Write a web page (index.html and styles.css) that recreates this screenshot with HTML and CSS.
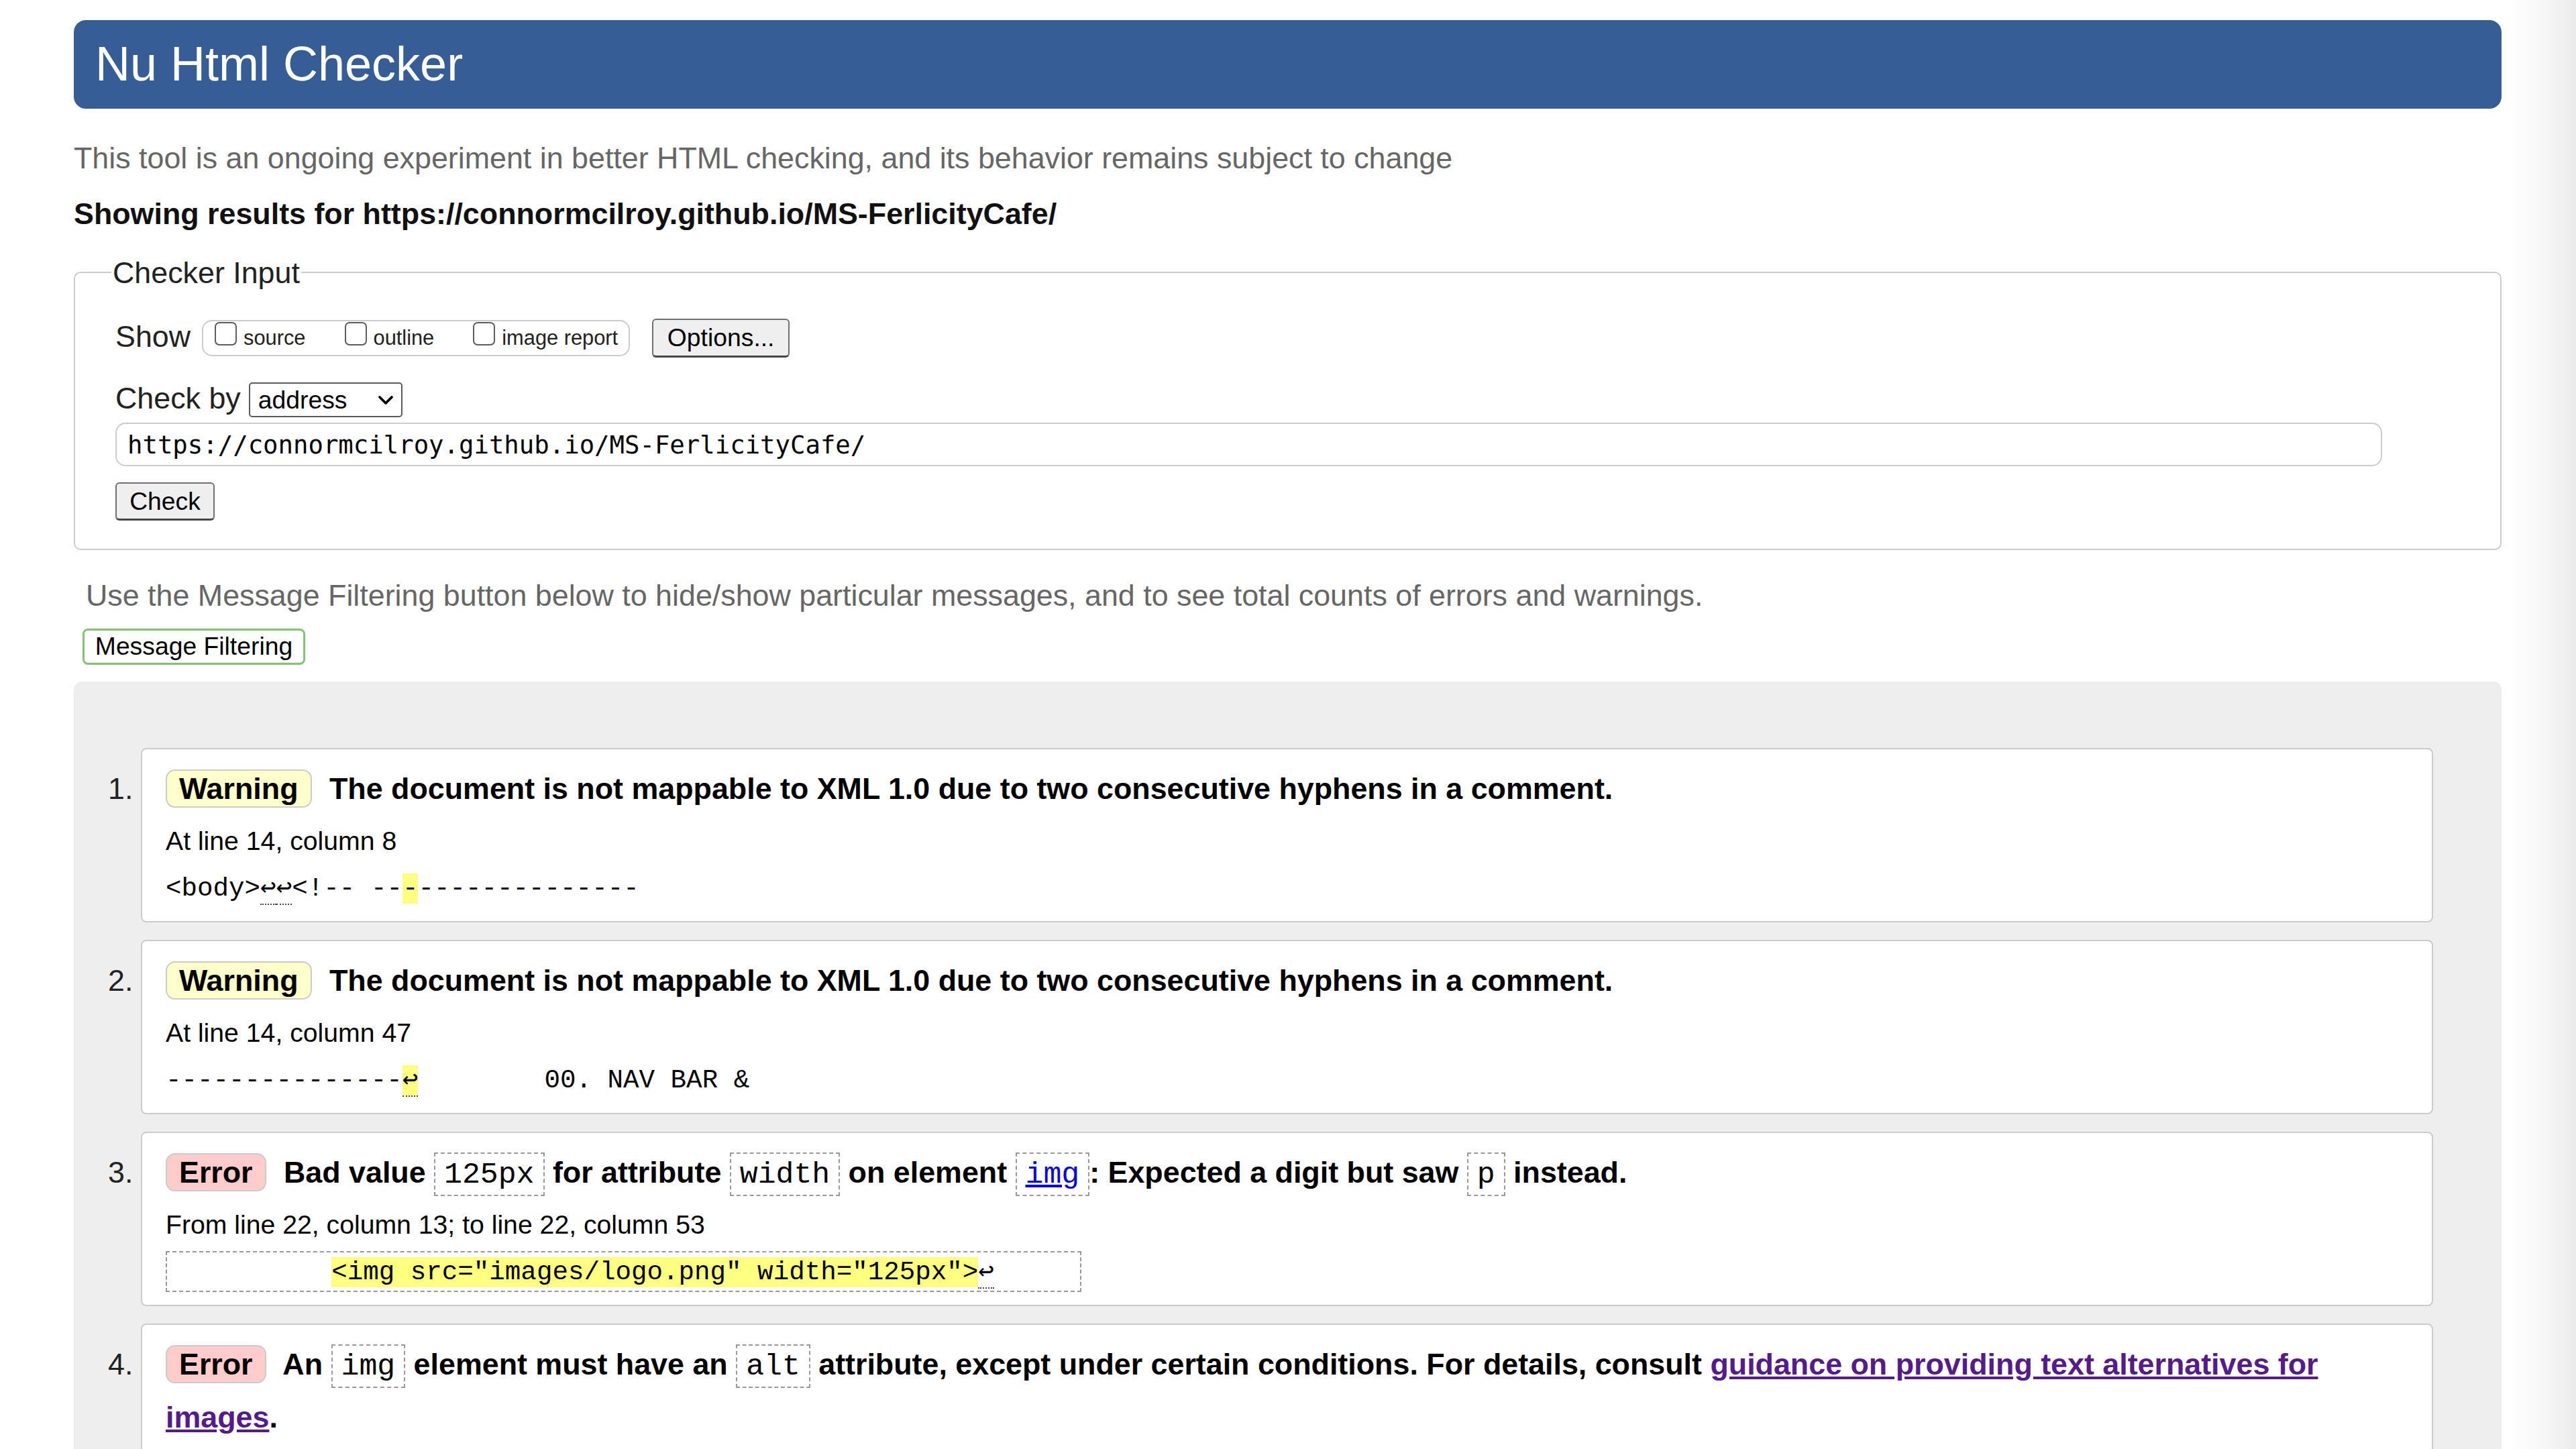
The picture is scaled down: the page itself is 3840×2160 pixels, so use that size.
FILE: index.html
```html
<!DOCTYPE html>
<html lang="en">
<head>
<meta charset="utf-8">
<title>Showing results for https://connormcilroy.github.io/MS-FerlicityCafe/ - Nu Html Checker</title>
<link rel="stylesheet" href="styles.css">
</head>
<body>
<h1 class="title">Nu Html Checker</h1>
<p class="intro">This tool is an ongoing experiment in better HTML checking, and its behavior remains subject to change</p>
<p class="showing">Showing results for https://connormcilroy.github.io/MS-FerlicityCafe/</p>

<fieldset class="checker">
  <legend class="legend">Checker Input</legend>
  <div class="row row-show">
    <span class="label">Show</span>
    <div class="opts">
      <label class="opt"><span class="box"></span><span class="opt-text">source</span></label>
      <label class="opt"><span class="box"></span><span class="opt-text">outline</span></label>
      <label class="opt"><span class="box"></span><span class="opt-text">image report</span></label>
    </div>
    <button class="btn btn-options" type="button">Options...</button>
  </div>
  <div class="row row-by">
    <span class="label">Check by</span>
    <div class="select">
      <span class="select-text">address</span>
      <svg class="chev" width="24" height="15" viewBox="0 0 24 15"><polyline points="3,3 12,12 21,3" fill="none" stroke="#000" stroke-width="3.8" stroke-linecap="round" stroke-linejoin="round"/></svg>
    </div>
  </div>
  <input class="url" type="url" value="https://connormcilroy.github.io/MS-FerlicityCafe/">
  <button class="btn btn-check" type="button">Check</button>
</fieldset>

<p class="hint">Use the Message Filtering button below to hide/show particular messages, and to see total counts of errors and warnings.</p>
<button class="filter" type="button">Message Filtering</button>

<div class="results">
  <ol class="messages">
    <li class="item">
      <span class="num">1.</span>
      <div class="card">
        <p class="msg"><strong class="badge badge-warn">Warning</strong> <span>The document is not mappable to XML 1.0 due to two consecutive hyphens in a comment.</span></p>
        <p class="loc">At line 14, column 8</p>
        <p class="extract"><code>&lt;body&gt;<span class="lf">↩</span><span class="lf">↩</span>&lt;!-- --<b class="hl">-</b>--------------</code></p>
      </div>
    </li>
    <li class="item">
      <span class="num">2.</span>
      <div class="card">
        <p class="msg"><strong class="badge badge-warn">Warning</strong> <span>The document is not mappable to XML 1.0 due to two consecutive hyphens in a comment.</span></p>
        <p class="loc">At line 14, column 47</p>
        <p class="extract"><code>---------------<b class="hl"><span class="lf">↩</span></b>        00. NAV BAR &amp;</code></p>
      </div>
    </li>
    <li class="item">
      <span class="num">3.</span>
      <div class="card">
        <p class="msg"><strong class="badge badge-err">Error</strong> <span>Bad value <code class="inl">125px</code> for attribute <code class="inl">width</code> on element <code class="inl"><a class="link" href="#">img</a></code>: Expected a digit but saw <code class="inl">p</code> instead.</span></p>
        <p class="loc">From line 22, column 13; to line 22, column 53</p>
        <p class="extract"><code class="boxed">          <b class="hl">&lt;img src="images/logo.png" width="125px"&gt;</b><span class="lf">↩</span>     </code></p>
      </div>
    </li>
    <li class="item">
      <span class="num">4.</span>
      <div class="card card-last">
        <p class="msg"><strong class="badge badge-err">Error</strong> <span>An <code class="inl">img</code> element must have an <code class="inl">alt</code> attribute, except under certain conditions. For details, consult <a class="visited" href="#">guidance on providing text alternatives for images</a>.</span></p>
      </div>
    </li>
  </ol>
</div>
</body>
</html>
```
FILE: styles.css
```css
html {
  overflow: hidden;
  background: linear-gradient(90deg, #fff 3740px, #f6f6f6 3795px, #ebebeb 3840px);
}

body {
  margin: 0;
  padding: 0 111px 0 110px;
  font-family: "Liberation Sans", Arial, Helvetica, sans-serif;
  font-size: 44.8px;
  color: #000;
}

.title {
  margin: 30px 0 0;
  height: 132px;
  box-sizing: border-box;
  padding: 0 0 0 32px;
  line-height: 130px;
  font-size: 72px;
  font-weight: normal;
  color: #fff;
  background: #365d95;
  border-radius: 18px;
}

.intro {
  margin: 47.7px 0 0;
  color: #666;
}

.showing {
  margin: 32.5px 0 0;
  font-weight: bold;
  color: #111;
}

.checker {
  margin: 36.5px 0 0;
  padding: 0 0 42px 60px;
  border: 2px solid #ccc;
  border-radius: 10px;
  min-width: 0;
}

.legend {
  padding: 0 2px;
  margin-left: -6px;
  color: #222;
  font-size: 44.8px;
}

.row {
  display: flex;
  align-items: center;
}

.row-show {
  margin-top: 43.8px;
  height: 58px;
}

.row-by {
  margin-top: 37px;
  height: 52px;
}

.label {
  font-size: 44.8px;
  color: #222;
  margin-bottom: 6px;
}

.opts {
  margin-left: 17px;
  display: flex;
  align-items: flex-start;
  gap: 58px;
  height: 54px;
  box-sizing: border-box;
  border: 2px solid #ccc;
  border-radius: 15px;
  padding: 1px 16px 0 17px;
}

.opt {
  display: flex;
  align-items: flex-start;
}

.box {
  width: 33px;
  height: 35px;
  box-sizing: border-box;
  border: 2px solid #5c5c5c;
  border-radius: 7px;
  background: #fff;
}

.opt-text {
  margin-left: 10px;
  font-size: 30.8px;
  line-height: 47px;
  color: #222;
}

.btn {
  padding: 0;
  font-family: "Liberation Sans", Arial, Helvetica, sans-serif;
  font-size: 37.3px;
  color: #000;
  background: #efefef;
  border: 2px solid #707070;
  border-bottom: 3px solid #474747;
  border-radius: 6px;
  box-sizing: border-box;
}

.btn-options {
  margin-left: 33px;
  width: 205px;
  height: 58px;
}

.select {
  margin-left: 12px;
  display: flex;
  align-items: center;
  justify-content: space-between;
  width: 229px;
  height: 52px;
  box-sizing: border-box;
  padding: 0 11px 0 12px;
  border: 2px solid #5a5a5a;
  border-radius: 5px;
  background: #fff;
  font-size: 37.3px;
  color: #000;
}

.chev {
  display: block;
}

.url {
  display: block;
  box-sizing: border-box;
  width: 3379px;
  height: 65px;
  margin: 8px 0 0;
  padding: 0 16px;
  border: 2px solid #ccc;
  border-radius: 15px;
  background: #fff;
  font-family: "DejaVu Sans Mono", Menlo, monospace;
  font-size: 37.3px;
  color: #000;
  outline: none;
}

.btn-check {
  display: block;
  margin-top: 24px;
  width: 148px;
  height: 57px;
}

.hint {
  margin: 41.7px 0 0;
  padding-left: 18px;
  color: #666;
}

.filter {
  display: block;
  margin: 23.8px 0 0 13px;
  width: 332px;
  height: 54px;
  box-sizing: border-box;
  padding: 0;
  border: 3px solid #82c472;
  border-radius: 8px;
  background: #fff;
  font-family: "Liberation Sans", Arial, Helvetica, sans-serif;
  font-size: 37.3px;
  color: #000;
}

.results {
  margin-top: 25px;
  padding: 99px 102px 80px 0;
  background: #eee;
  border-radius: 12px 12px 0 0;
}

.messages {
  list-style: none;
  margin: 0;
  padding: 0;
}

.item {
  display: flex;
  align-items: baseline;
  margin-bottom: 26px;
}

.num {
  flex: 0 0 100px;
  box-sizing: border-box;
  padding-right: 11.6px;
  text-align: right;
  font-size: 44.8px;
  color: #222;
}

.card {
  flex: 1;
  min-width: 0;
  background: #fff;
  border: 2px solid #ccc;
  border-radius: 8px;
  padding: 19.5px 35px 25.6px;
}

.card-last {
  padding-bottom: 60px;
}

.msg {
  margin: 0;
  font-weight: bold;
  line-height: 79px;
}

.badge {
  display: inline-block;
  line-height: 50px;
  padding: 1px 18px 2px;
  border: 2px solid #ccc;
  border-radius: 14px;
  margin-right: 14px;
  vertical-align: baseline;
}

.badge-warn {
  background: #ffffcc;
}

.badge-err {
  background: #ffcccc;
}

.inl {
  font-family: "Liberation Mono", "Courier New", monospace;
  font-weight: normal;
  font-size: 44.8px;
  line-height: 40px;
  padding: 6px 13px 5px;
  border: 2px dashed #999;
}

.link {
  color: #0000ee;
  text-decoration: underline;
}

.visited {
  color: #551a8b;
  text-decoration: underline;
}

.loc {
  margin: 16.4px 0 0;
  font-size: 39.2px;
}

.extract {
  margin: 27.1px 0 0;
  font-family: "Liberation Mono", "Courier New", "DejaVu Sans Mono", monospace;
  font-size: 39.2px;
  line-height: 44.4px;
  white-space: pre;
}

.extract code {
  font-family: inherit;
  font-size: inherit;
}

.boxed {
  border: 2px dashed #999;
  padding: 7px 10px 5px;
}

.hl {
  font-weight: normal;
  background: #ffff80;
}

.lf {
  border-bottom: 2px dotted #444;
}
```
